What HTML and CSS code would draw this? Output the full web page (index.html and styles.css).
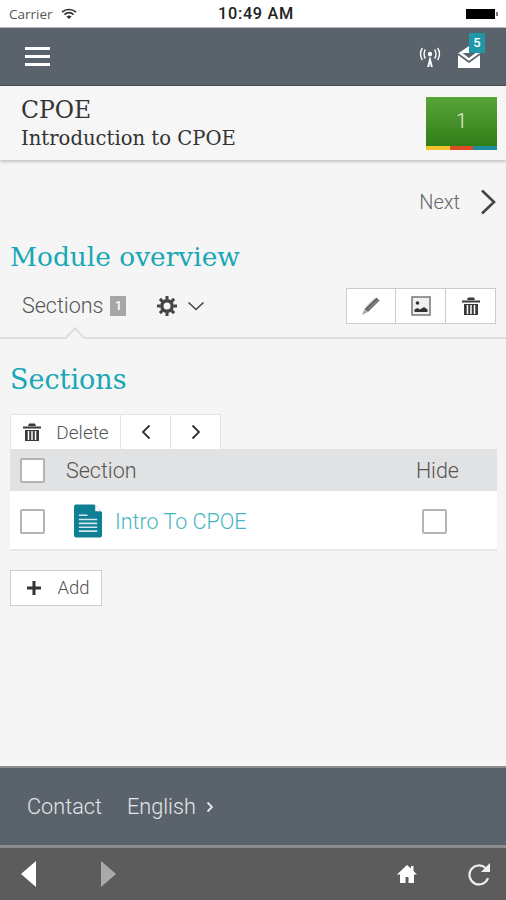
FILE: index.html
```html
<!DOCTYPE html>
<html lang="en">
<head>
    <meta charset="UTF-8">
    <meta name="viewport" content="width=device-width, initial-scale=1.0">
    <title>Module overview</title>
    <link rel="stylesheet" href="styles.css">
</head>
<body>
    <div class="status-bar">
        <div class="status-left">
            <span>Carrier</span>
            <svg class="wifi" width="16" height="12" viewBox="0 0 16 12"><path d="M1 4.200C5 .6 11 .6 15 4.200M3.400 6.600C6.200 4.200 9.800 4.200 12.600 6.600" fill="none" stroke="#333" stroke-width="1.700"/><path d="M5.400 8.400C7 7.200 9 7.200 10.600 8.400L8 11Z" fill="#333"/></svg>
        </div>
        <div class="status-time">10:49 AM</div>
        <div class="battery"><span class="battery-body"></span><span class="battery-tip"></span></div>
    </div>

    <header class="top-bar">
        <div class="burger"><span></span><span></span><span></span></div>
        <div class="top-icons">
            <svg width="22" height="22" viewBox="0 0 22 22"><path d="M11 9.500L8.200 21h2l.8-4 .8 4h2z" fill="#fff"/><circle cx="11" cy="8" r="2.200" fill="#fff"/><path d="M6.400 3.500C4.600 6 4.600 10 6.400 12.500M15.600 3.500C17.400 6 17.400 10 15.600 12.500M3.400 2C.9 5.500.9 10.500 3.400 14M18.600 2C21.100 5.500 21.100 10.500 18.600 14" fill="none" stroke="#fff" stroke-width="1.400"/></svg>
            <div class="mail">
                <svg width="24" height="24" viewBox="0 0 24 24"><path d="M1 8.500L12 1l11 7.500V23H1z" fill="#fff"/><path d="M1 9l11 8 11-8" fill="none" stroke="#5a626b" stroke-width="1.600"/><path d="M5.500 8h13l-6.500 5z" fill="#5a626b"/></svg>
                <span class="mail-badge">5</span>
            </div>
        </div>
    </header>

    <div class="course-bar">
        <div class="course-titles">
            <div class="course-name">CPOE</div>
            <div class="course-sub">Introduction to CPOE</div>
        </div>
        <div class="score">
            <div class="score-num">1</div>
            <div class="score-stripes"><span class="yellow"></span><span class="red"></span><span class="blue"></span></div>
        </div>
    </div>

    <main class="content">
        <div class="next-row">
            <span>Next</span>
            <svg width="16" height="26" viewBox="0 0 16 26"><path d="M2 1.500L14 13 2 24.500" fill="none" stroke="#444" stroke-width="2.600"/></svg>
        </div>

        <h1 class="page-title">Module overview</h1>

        <div class="tabs">
            <div class="tab-active">Sections <span class="tab-count">1</span></div>
            <div class="gear-menu">
                <svg width="20" height="20" viewBox="0 0 20 20"><circle cx="10" cy="10" r="5.200" fill="none" stroke="#444" stroke-width="3.400"/><path d="M10 0v20M0 10h20M2.900 2.900l14.200 14.200M17.100 2.900L2.900 17.100" stroke="#444" stroke-width="3" stroke-dasharray="3.500 13 3.500 0"/></svg>
                <svg width="18" height="10" viewBox="0 0 18 10"><path d="M1.500 1.500L9 8.500l7.500-7" fill="none" stroke="#444" stroke-width="1.600"/></svg>
            </div>
            <div class="btn-group">
                <button class="icon-btn">
                    <svg width="22" height="22" viewBox="0 0 22 22"><path d="M16.500 2.500L19.500 5.500 8 17 4.500 14z" fill="#666"/><path d="M6 11.500L15 3M8.500 14L17.500 5.500" stroke="#bbb" stroke-width=".7"/><path d="M4.500 14L8 17 2 20z" fill="#aaa"/></svg>
                </button>
                <button class="icon-btn">
                    <svg width="22" height="22" viewBox="0 0 22 22"><rect x="2" y="2" width="18" height="18" fill="#f0f0f0" stroke="#777" stroke-width="1.500"/><circle cx="7.500" cy="8" r="1.800" fill="#333"/><path d="M4.500 17v-2.500l3-1.500 2.500 1.500 4-2.500 3.500 2.500V17z" fill="#333"/></svg>
                </button>
                <button class="icon-btn">
                    <svg class="trash" width="20" height="20" viewBox="0 0 20 20"><use href="#trash-icon"/></svg>
                </button>
            </div>
        </div>

        <h2 class="section-title">Sections</h2>

        <div class="table-tools">
            <button class="tool-btn delete-btn">
                <svg width="20" height="20" viewBox="0 0 20 20"><use href="#trash-icon"/></svg>
                <span>Delete</span>
            </button>
            <button class="tool-btn arrow-btn">
                <svg width="10" height="16" viewBox="0 0 10 16"><path d="M8.500 1.500L2 8l6.500 6.500" fill="none" stroke="#333" stroke-width="1.800"/></svg>
            </button>
            <button class="tool-btn arrow-btn">
                <svg width="10" height="16" viewBox="0 0 10 16"><path d="M1.500 1.500L8 8l-6.500 6.500" fill="none" stroke="#333" stroke-width="1.800"/></svg>
            </button>
        </div>

        <div class="table">
            <div class="table-head">
                <span class="check"></span>
                <span class="col-section">Section</span>
                <span class="col-hide">Hide</span>
            </div>
            <div class="table-row">
                <span class="check"></span>
                <svg class="doc-icon" width="29" height="34" viewBox="0 0 30 34"><path d="M2 0h19l8 8v24a2 2 0 0 1-2 2H2a2 2 0 0 1-2-2V2a2 2 0 0 1 2-2z" fill="#0f7f95"/><path d="M22 1l6 6h-6z" fill="#fff"/><path d="M5 11h9M5 15.500h19M5 19.500h19M5 23.500h19M5 27.500h19" stroke="#cfe6ea" stroke-width="1.700"/></svg>
                <a class="row-link">Intro To CPOE</a>
                <span class="check hide-check"></span>
            </div>
        </div>

        <button class="add-btn">
            <svg width="16" height="16" viewBox="0 0 16 16"><path d="M8 1v14M1 8h14" stroke="#333" stroke-width="3"/></svg>
            <span>Add</span>
        </button>
    </main>

    <footer class="footer">
        <span>Contact</span>
        <span>English</span>
        <svg width="8" height="12" viewBox="0 0 8 12"><path d="M1.500 1.500L6 6l-4.500 4.500" fill="none" stroke="#e8e8e8" stroke-width="1.800"/></svg>
    </footer>

    <nav class="bottom-bar">
        <div class="nav-side">
            <svg width="15" height="26" viewBox="0 0 15 26"><path d="M15 0v26L0 13z" fill="#fff"/></svg>
            <svg width="15" height="26" viewBox="0 0 15 26"><path d="M0 0v26l15-13z" fill="#aaa"/></svg>
        </div>
        <div class="nav-side nav-right">
            <svg width="22" height="22" viewBox="0 0 22 22"><path d="M11 2L1 11.500h3V20h5.500v-6h3v6H18v-8.500h3L17.500 8V3H15v2.500z" fill="#fff"/></svg>
            <svg width="24" height="26" viewBox="0 0 24 26"><path d="M20 17a9.500 9.500 0 1 1-2.500-10" fill="none" stroke="#f0f0f0" stroke-width="2.200"/><path d="M22 2v9h-9z" fill="#f0f0f0"/></svg>
        </div>
    </nav>

    <svg class="defs" width="0" height="0">
        <symbol id="trash-icon" viewBox="0 0 20 20">
            <path d="M1 4.500h18V6.500H1zM7 1.500h6l1 2.500H6zM3 8h14v11H3z" fill="#3a3a3a"/>
            <path d="M6.500 9v9M10 9v9M13.500 9v9" stroke="#fff" stroke-width="1.500"/>
        </symbol>
    </svg>
</body>
</html>
```

FILE: styles.css
```css
* {
    box-sizing: border-box;
}
body {
    margin: 0;
    width: 506px;
    height: 900px;
    display: flex;
    flex-direction: column;
    overflow: hidden;
    background: #f5f5f5;
    font-family: Roboto, sans-serif;
    font-weight: 300;
    color: #444;
}
button {
    font-family: inherit;
    font-weight: inherit;
    color: inherit;
    padding: 0;
    background: #fff;
    display: flex;
    align-items: center;
    justify-content: center;
}
svg {
    display: block;
    flex: none;
}
.defs {
    position: absolute;
}

/* status bar */
.status-bar {
    height: 28px;
    flex: none;
    background: #fff;
    border-bottom: 1px solid #bbb;
    display: flex;
    align-items: center;
    justify-content: space-between;
    padding: 0 8px 0 9px;
    font-family: "Open Sans", sans-serif;
    font-weight: 400;
    color: #333;
    position: relative;
}
.status-left {
    display: flex;
    align-items: center;
    gap: 8px;
    font-size: 13.500px;
    color: #555;
}
.status-time {
    position: absolute;
    left: 6px;
    right: 0;
    text-align: center;
    font-family: Roboto, sans-serif;
    font-size: 16.300px;
    font-weight: 500;
    color: #222;
    letter-spacing: .7px;
}
.battery {
    display: flex;
    align-items: center;
    gap: 1px;
}
.battery-body {
    width: 29px;
    height: 10px;
    background: #000;
}
.battery-tip {
    width: 2px;
    height: 4px;
    background: #777;
}

/* top bar */
.top-bar {
    height: 58px;
    flex: none;
    background: #5a626b;
    border-bottom: 1px solid #484e55;
    display: flex;
    align-items: center;
    justify-content: space-between;
    padding: 0 25px 0 25px;
}
.burger {
    width: 25px;
    display: flex;
    flex-direction: column;
    gap: 5px;
}
.burger span {
    height: 3px;
    background: #fff;
}
.top-icons {
    display: flex;
    align-items: center;
    gap: 16px;
}
.mail {
    position: relative;
    width: 24px;
    height: 24px;
}
.mail-badge {
    position: absolute;
    top: -12px;
    right: -4px;
    width: 16px;
    height: 20px;
    background: #1f97a8;
    color: #fff;
    font-size: 13px;
    font-weight: 500;
    text-align: center;
    line-height: 20px;
}

/* course header */
.course-bar {
    height: 74px;
    flex: none;
    background: #f6f6f6;
    box-shadow: 0 2px 3px rgba(0, 0, 0, .2);
    display: flex;
    align-items: center;
    justify-content: space-between;
    padding: 0 9px 0 21px;
    position: relative;
}
.course-name,
.course-sub,
.page-title,
.section-title {
    font-family: "DejaVu Serif", serif;
    font-weight: 400;
}
.course-titles {
    padding-top: 2px;
}
.course-name {
    font-size: 23.500px;
    line-height: 29px;
    color: #333;
}
.course-sub {
    font-size: 19.600px;
    line-height: 27px;
    color: #333;
}
.score {
    width: 71px;
    height: 53px;
    display: flex;
    flex-direction: column;
    background: linear-gradient(#5aa53a, #2e7a14);
}
.score-num {
    flex: 1;
    display: flex;
    align-items: center;
    justify-content: center;
    color: #e4f0dc;
    font-size: 20px;
}
.score-stripes {
    height: 4px;
    display: flex;
}
.score-stripes span {
    flex: 1;
}
.yellow {
    background: #f2c12e;
}
.red {
    background: #dd4b27;
}
.blue {
    background: #1d8aa0;
}

/* main */
.content {
    flex: 1;
    padding: 0 9px 0 10px;
    display: flex;
    flex-direction: column;
    align-items: stretch;
}
.next-row {
    height: 80px;
    flex: none;
    display: flex;
    align-items: center;
    justify-content: flex-end;
    gap: 20px;
    padding-top: 3px;
    padding-right: 1px;
    font-size: 20px;
    color: #666;
}
.page-title {
    margin: 0;
    font-size: 26.400px;
    line-height: 34px;
    color: #18a7b5;
}
.tabs {
    height: 65px;
    margin: 0 -9px 0 -10px;
    padding: 0 10px 0 22px;
    flex: none;
    display: flex;
    align-items: center;
    border-bottom: 2px solid #ddd;
    position: relative;
}
.tabs::after {
    content: "";
    position: absolute;
    left: 68px;
    bottom: -7px;
    width: 12px;
    height: 12px;
    background: #f5f5f5;
    border-left: 2px solid #ddd;
    border-top: 2px solid #ddd;
    transform: rotate(45deg);
}
.tab-active {
    font-size: 21.500px;
    display: flex;
    align-items: center;
    gap: 7px;
    color: #555;
}
.tab-count {
    width: 16px;
    height: 20px;
    background: #a6a6a6;
    color: #fff;
    font-size: 13px;
    font-weight: 500;
    text-align: center;
    line-height: 20px;
}
.gear-menu {
    margin-left: 31px;
    display: flex;
    align-items: center;
    gap: 10px;
}
.btn-group {
    margin-left: auto;
    display: flex;
}
.icon-btn {
    width: 50px;
    height: 36px;
    border: 1px solid #ccc;
    border-left: none;
}
.icon-btn:first-child {
    border-left: 1px solid #ccc;
}
.section-title {
    margin: 0;
    padding-top: 24px;
    font-size: 27px;
    line-height: 34px;
    color: #18a7b5;
}
.table-tools {
    margin-top: 17px;
    height: 35px;
    flex: none;
    display: flex;
}
.tool-btn {
    height: 35px;
    border: 1px solid #e4e4e4;
    border-bottom: none;
    border-left: none;
}
.delete-btn {
    width: 111px;
    gap: 14px;
    font-size: 19px;
    border-left: 1px solid #e4e4e4;
    color: #555;
}
.arrow-btn {
    width: 50px;
}
.table-head {
    height: 42px;
    background: #e1e2e3;
    display: flex;
    align-items: center;
    padding: 0 38px 0 10px;
    font-size: 21.500px;
    color: #555;
}
.col-section {
    margin-left: 21px;
}
.col-hide {
    margin-left: auto;
}
.table-row {
    height: 60px;
    background: #fff;
    border-bottom: 2px solid #e8e8e8;
    display: flex;
    align-items: center;
    padding: 2px 50px 0 10px;
}
.check {
    width: 25px;
    height: 25px;
    flex: none;
    border: 2px solid #b4b4b4;
    border-radius: 2px;
    background: #fff;
}
.doc-icon {
    margin-left: 29px;
}
.row-link {
    margin-left: 12px;
    font-size: 21.500px;
    color: #45b5c2;
}
.hide-check {
    margin-left: auto;
}
.add-btn {
    margin-top: 19px;
    width: 92px;
    height: 36px;
    gap: 15px;
    padding-left: 4px;
    font-size: 18.500px;
    border: 1px solid #ccc;
    color: #555;
}

/* footer */
.footer {
    height: 82px;
    flex: none;
    background: #5a626b;
    border-top: 2px solid #8a8f94;
    border-bottom: 3px solid #8c8c8c;
    display: flex;
    align-items: center;
    padding: 0 0 0 27px;
    font-size: 21.700px;
    color: #e4e6e8;
}
.footer span {
    margin-right: 25px;
}
.footer span:nth-child(2) {
    margin-right: 10px;
}
.bottom-bar {
    height: 52px;
    flex: none;
    background: #5c5c5c;
    display: flex;
    align-items: center;
    justify-content: space-between;
    padding: 0 14px 0 21px;
}
.nav-side {
    display: flex;
    align-items: center;
    gap: 65px;
}
.nav-right {
    gap: 50px;
}
```
